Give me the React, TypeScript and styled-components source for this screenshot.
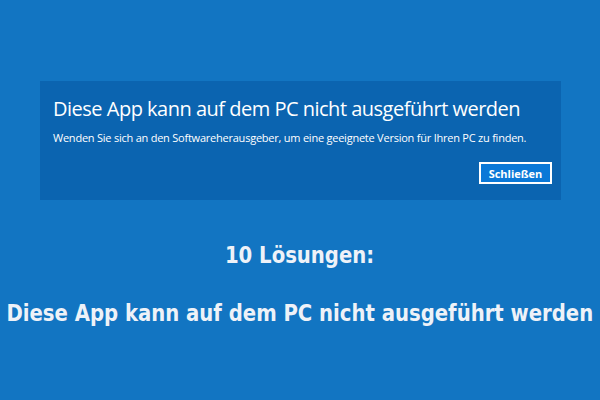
import React from "react";
import styled, { createGlobalStyle } from "styled-components";

const GlobalStyle = createGlobalStyle`
	html, body {
		margin: 0;
		padding: 0;
	}
	body {
		width: 600px;
		height: 400px;
		overflow: hidden;
		background: #1275c2;
	}
`;

export default function App() {
	return (
		<>
			<GlobalStyle />
			<Page>
				<Dialog>
					<DialogTitle>Diese App kann auf dem PC nicht ausgeführt werden</DialogTitle>
					<DialogText>
						Wenden Sie sich an den Softwareherausgeber, um eine geeignete Version für Ihren PC zu finden.
					</DialogText>
					<DialogFooter>
						<CloseButton>Schließen</CloseButton>
					</DialogFooter>
				</Dialog>
				<Headline>10 Lösungen:</Headline>
				<Headline $top="28px">Diese App kann auf dem PC nicht ausgeführt werden</Headline>
			</Page>
		</>
	);
}

const Page = styled.div`
	width: 600px;
	height: 400px;
	box-sizing: border-box;
	padding-top: 81px;
	display: flex;
	flex-direction: column;
	align-items: center;
	background: #1275c2;
`;

const Dialog = styled.div`
	width: 521px;
	height: 119px;
	margin-left: 1px;
	box-sizing: border-box;
	padding: 16px 0 0 13px;
	background: #0b64b0;
	display: flex;
	flex-direction: column;
	font-family: "Open Sans", "Noto Sans", sans-serif;
	color: #ffffff;
`;

const DialogTitle = styled.div`
	font-size: 20px;
	line-height: 24px;
	letter-spacing: -0.5px;
`;

const DialogText = styled.div`
	margin-top: 10px;
	font-size: 11px;
	line-height: 14px;
	letter-spacing: -0.23px;
`;

const DialogFooter = styled.div`
	display: flex;
	justify-content: flex-end;
	padding-right: 9px;
	margin-top: 17px;
`;

const CloseButton = styled.button`
	width: 73px;
	height: 22px;
	box-sizing: border-box;
	border: 2px solid #ffffff;
	background: #0a78d7;
	color: #ffffff;
	font-family: "Open Sans", "Noto Sans", sans-serif;
	font-weight: 700;
	font-size: 11px;
	padding: 0;
`;

const Headline = styled.div<{ $top?: string }>`
	margin-top: ${(p) => p.$top ?? "40px"};
	font-family: "DejaVu Sans Condensed", "DejaVu Sans", sans-serif;
	font-stretch: condensed;
	font-weight: 700;
	font-size: 23px;
	line-height: 30px;
	color: #eef2f8;
	white-space: nowrap;
	transform: scaleX(0.95);
`;
